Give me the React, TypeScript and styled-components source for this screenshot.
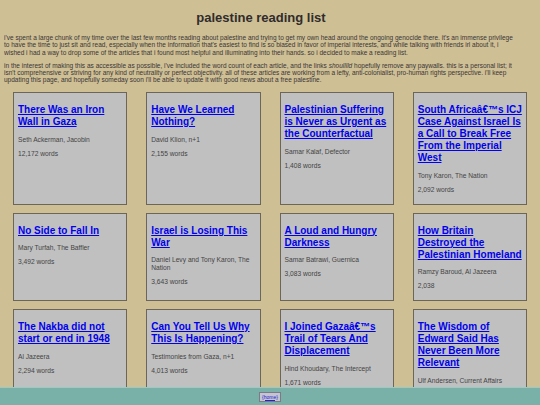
import * as React from 'react';
import styled, { createGlobalStyle } from 'styled-components';

const GlobalStyle = createGlobalStyle`
  html, body {
    background: #cfbf95;
  }
  body {
    margin: 4px;
    font-family: "Liberation Sans", Arial, sans-serif;
    color: #3a3636;
  }
`;

const Header = styled.header`
  padding-right: 18px;
`;

const Title = styled.h1`
  font-size: 13px;
  line-height: 15px;
  font-weight: bold;
  text-align: center;
  color: #302c2c;
  margin: 5.5px 0 9.5px 0;
`;

const Intro = styled.p`
  font-size: 6.52px;
  line-height: 7.35px;
  margin: 0 0 5.7px 0;
`;

const Grid = styled.div`
  display: grid;
  grid-template-columns: repeat(4, 1fr);
  column-gap: 19px;
  row-gap: 8px;
  padding: 3px 9px 40px;
`;

const Card = styled.div`
  background: #c0c0c0;
  border: 1px solid #6b6659;
  padding: 0 4px 3.5px;
`;

const CardTitle = styled.h3`
  font-size: 10px;
  line-height: 12px;
  font-weight: bold;
  margin: 10.7px 0 7.6px;

  a {
    color: #0000ee;
    text-decoration: underline;
  }
`;

const Meta = styled.p`
  font-size: 6.67px;
  line-height: 7.66px;
  color: #444;
  margin: 0 0 6.67px 0;
`;

const Footer = styled.div`
  position: fixed;
  left: 0;
  right: 0;
  bottom: 0;
  height: 17px;
  background: #79b0a8;
  border-top: 1px solid #9cc9c1;
  display: flex;
  align-items: center;
  justify-content: center;
`;

const HomeButton = styled.div`
  background: #c4c4d4;
  border: 1px solid #7b7b86;
  padding: 1px 2px;
  font-size: 5px;
  line-height: 6px;

  a {
    color: #2222cc;
    text-decoration: underline;
  }
`;

interface Article {
  title: string,
  author: string,
  words: string,
}

const articles: Article[] = [
  { title: 'There Was an Iron Wall in Gaza', author: 'Seth Ackerman, Jacobin', words: '12,172 words' },
  { title: 'Have We Learned Nothing?', author: 'David Klion, n+1', words: '2,155 words' },
  { title: 'Palestinian Suffering is Never as Urgent as the Counterfactual', author: 'Samar Kalaf, Defector', words: '1,408 words' },
  { title: 'South Africa\u00e2\u20ac\u2122s ICJ Case Against Israel Is a Call to Break Free From the Imperial West', author: 'Tony Karon, The Nation', words: '2,092 words' },
  { title: 'No Side to Fall In', author: 'Mary Turfah, The Baffler', words: '3,492 words' },
  { title: 'Israel is Losing This War', author: 'Daniel Levy and Tony Karon, The Nation', words: '3,643 words' },
  { title: 'A Loud and Hungry Darkness', author: 'Samar Batrawi, Guernica', words: '3,083 words' },
  { title: 'How Britain Destroyed the Palestinian Homeland', author: 'Ramzy Baroud, Al Jazeera', words: '2,038' },
  { title: 'The Nakba did not start or end in 1948', author: 'Al Jazeera', words: '2,294 words' },
  { title: 'Can You Tell Us Why This Is Happening?', author: 'Testimonies from Gaza, n+1', words: '4,013 words' },
  { title: 'I Joined Gaza\u00e2\u20ac\u2122s Trail of Tears And Displacement', author: 'Hind Khoudary, The Intercept', words: '1,671 words' },
  { title: 'The Wisdom of Edward Said Has Never Been More Relevant', author: 'Ulf Andersen, Current Affairs', words: '3,118 words' },
];

function App() {
  return (
    <>
      <GlobalStyle />
      <Header>
        <Title>palestine reading list</Title>
        <Intro>
          i've spent a large chunk of my time over the last few months reading about palestine and trying to get my own head around the ongoing genocide there. it's an immense privilege to have the time to just sit and read, especially when the information that's easiest to find is so biased in favor of imperial interests, and while talking with friends irl about it, i wished i had a way to drop some of the articles that i found most helpful and illuminating into their hands. so i decided to make a reading list.
        </Intro>
        <Intro>
          in the interest of making this as accessible as possible, i've included the word count of each article, and the links <i>shoulllld</i> hopefully remove any paywalls. this is a personal list; it isn't comprehensive or striving for any kind of neutrality or perfect objectivity. all of these articles are working from a lefty, anti-colonialist, pro-human rights perspective. i'll keep updating this page, and hopefully someday soon i'll be able to update it with good news about a free palestine.
        </Intro>
      </Header>
      <Grid>
        {articles.map((article, i) => (
          <Card key={i}>
            <CardTitle><a href="#">{article.title}</a></CardTitle>
            <Meta>{article.author}</Meta>
            <Meta>{article.words}</Meta>
          </Card>
        ))}
      </Grid>
      <Footer>
        <HomeButton><a href="#">{'{home}'}</a></HomeButton>
      </Footer>
    </>
  );
}

export default App;
